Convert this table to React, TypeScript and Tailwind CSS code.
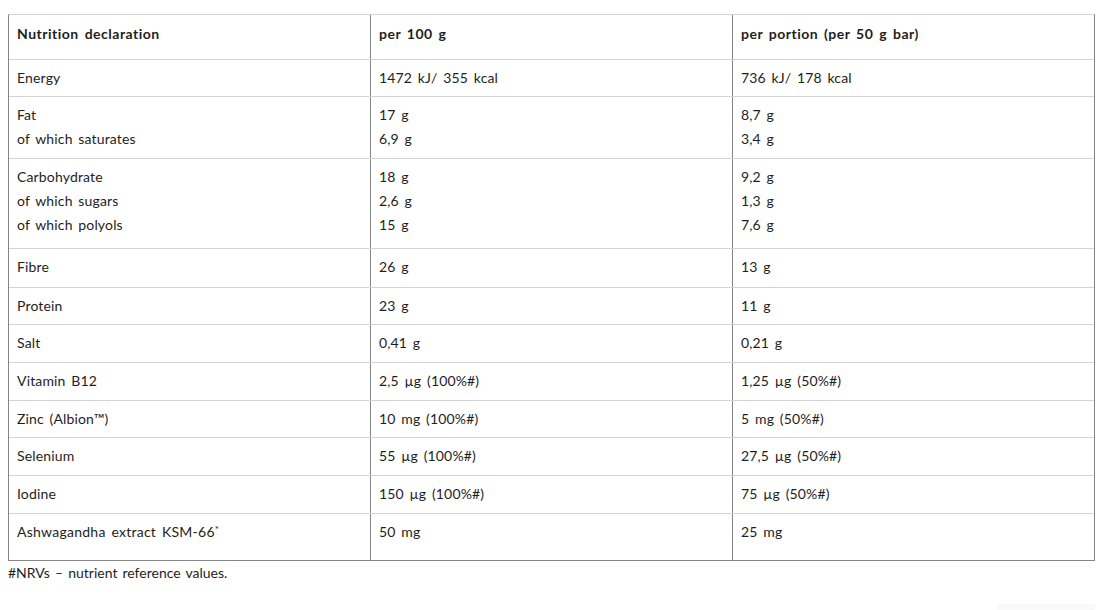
import React from "react";

type Row = { h: number; c: string[][] };

const rows: Row[] = [
  { h: 37, c: [["Energy"], ["1472 kJ/ 355 kcal"], ["736 kJ/ 178 kcal"]] },
  { h: 62, c: [["Fat", "of which saturates"], ["17 g", "6,9 g"], ["8,7 g", "3,4 g"]] },
  {
    h: 90,
    c: [
      ["Carbohydrate", "of which sugars", "of which polyols"],
      ["18 g", "2,6 g", "15 g"],
      ["9,2 g", "1,3 g", "7,6 g"],
    ],
  },
  { h: 39, c: [["Fibre"], ["26 g"], ["13 g"]] },
  { h: 37, c: [["Protein"], ["23 g"], ["11 g"]] },
  { h: 38, c: [["Salt"], ["0,41 g"], ["0,21 g"]] },
  { h: 38, c: [["Vitamin B12"], ["2,5 µg (100%#)"], ["1,25 µg (50%#)"]] },
  { h: 37, c: [["Zinc (Albion™)"], ["10 mg (100%#)"], ["5 mg (50%#)"]] },
  { h: 38, c: [["Selenium"], ["55 µg (100%#)"], ["27,5 µg (50%#)"]] },
  { h: 38, c: [["Iodine"], ["150 µg (100%#)"], ["75 µg (50%#)"]] },
];

const font = { fontFamily: "Lato, 'Liberation Sans', sans-serif" };

function Cell({
  lines,
  last,
  head,
  children,
}: {
  lines?: string[];
  last?: boolean;
  head?: boolean;
  children?: React.ReactNode;
}) {
  return (
    <div
      className={`pl-2 ${head ? "pt-[7px]" : "pt-[6px]"} leading-[24px] ${
        last ? "" : "border-r border-[#858585]"
      }`}
    >
      {children ??
        lines!.map((l, i) => (
          <div key={i}>{l}</div>
        ))}
    </div>
  );
}

export default function App() {
  return (
    <div
      className="bg-white w-[1114px] h-[610px] text-[#1e1e1e] text-[14px] tracking-[0.15px] [word-spacing:2px] relative"
      style={font}
    >
      <div className="pt-[14px] pl-[8px]">
        <div className="w-[1087px] border-t border-t-[#d4d4d4] border-l border-r border-b border-l-[#858585] border-r-[#858585] border-b-[#858585]">
          <div className="grid grid-cols-[362px_362px_361px] h-[45px] border-b border-[#d4d4d4] font-bold tracking-[0.5px]">
            <Cell head lines={["Nutrition declaration"]} />
            <Cell head lines={["per 100 g"]} />
            <Cell head lines={["per portion (per 50 g bar)"]} last />
          </div>
          {rows.map((r, i) => (
            <div
              key={i}
              className="grid grid-cols-[362px_362px_361px] border-b border-[#d4d4d4]"
              style={{ height: r.h }}
            >
              <Cell lines={r.c[0]} />
              <Cell lines={r.c[1]} />
              <Cell lines={r.c[2]} last />
            </div>
          ))}
          <div className="grid grid-cols-[362px_362px_361px] h-[46px]">
            <Cell>
              <div className="tracking-[0.25px]">
                Ashwagandha extract KSM-66
                <span className="text-[10px] align-top relative -top-[3px]">*</span>
              </div>
            </Cell>
            <Cell lines={["50 mg"]} />
            <Cell lines={["25 mg"]} last />
          </div>
        </div>
        <div className="text-[14px] leading-[24px] tracking-[0px] [word-spacing:1.5px]">
          #NRVs – nutrient reference values.
        </div>
      </div>
      <div className="absolute left-[997px] top-[604px] w-[98px] h-[6px] bg-[#f9f9f9]" />
    </div>
  );
}
